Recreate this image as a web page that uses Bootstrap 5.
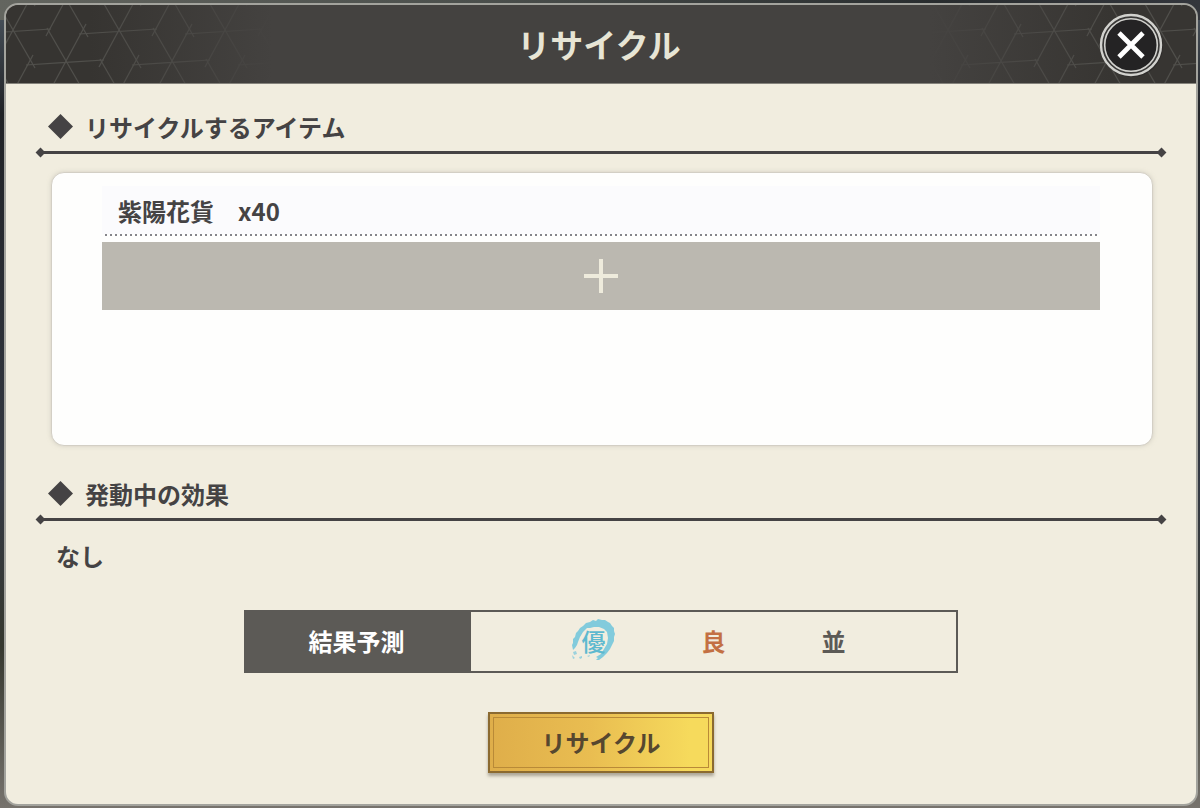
<!DOCTYPE html>
<html lang="ja">
<head>
<meta charset="utf-8">
<meta name="viewport" content="width=device-width, initial-scale=1">
<title>リサイクル</title>
<link href="https://cdn.jsdelivr.net/npm/bootstrap@5.3.0/dist/css/bootstrap.min.css" rel="stylesheet">
<style>
:root { --ink: #454344; --paper: #f1eddf; --slate: #5c5a56; }
body { font-family: "Noto Sans CJK JP", "Noto Sans", sans-serif; font-size: 24px; line-height: 36px; font-weight: 700; color: var(--ink); background: #3b3e42; }
.backdrop { padding: 3px 2px 2px 4px; background: linear-gradient(90deg, #63655f, #4b4f4c 40%, #292d2f 78%, #33363c) top / 100% 20px no-repeat, linear-gradient(#4c5660, #202226 14%, #343943 60%, #36382f 80%, #77736d); }
.dialog-panel { background: var(--paper); border: 2px solid #a3a39d; border-radius: 14px; overflow: hidden; }
.dialog-head { height: 79px; background: #444240; border-bottom: 1px solid #85837c; }
.dialog-head h1 { font-size: 33px; line-height: 48px; font-weight: 700; color: #e7e5d5; }
.lattice { width: 280px; height: 100%; }
.lattice-start { left: 0; top: 0; }
.lattice-end { right: 0; top: 0; }
.close-btn { right: 33px; top: 8px; width: 64px; height: 64px; }
.dialog-content { padding: 25px 30px 28px; }
.section-title { font-size: 24px; line-height: 36px; font-weight: 700; gap: 12px; padding: 0 12px; }
.rule-line { height: 3px; margin: 6px 4px 0; background: var(--ink); position: relative; }
.rule-line::before, .rule-line::after { content: ""; position: absolute; top: -2px; width: 7px; height: 7px; background: var(--ink); transform: rotate(45deg); }
.rule-line::before { left: -3px; }
.rule-line::after { right: -3px; }
.item-box { min-height: 274px; margin: 18px 13px 0 15px; padding: 13px 52px 13px 50px; background: #fefefd; border: 1px solid #d3cfc5; border-radius: 13px; box-shadow: 0 0 4px #b5b1a680; }
.item-row { height: 48px; padding: 7px 16px 0; background: #fbfbfd; }
.dots { display: block; width: 100%; height: 2px; }
.add-btn { height: 68px; margin-top: 6px; background: #bbb8b0; border: 0; }
.effect-title { margin-top: 30px; }
.effect-text { margin: 17px 20px 0; }
.forecast { width: 714px; max-width: 100%; height: 63px; border: 2px solid var(--slate); margin-top: 36px; }
.forecast-label { width: 225px; padding-right: 4px; background: var(--slate); color: #fff; }
.forecast-label, .grade { line-height: 34px; padding-bottom: 1px; }
.grade { width: 120px; }
.grade-best { color: #5eb9cf; font-weight: 500; }
.grade-good { color: #c37043; }
.grade-normal { color: var(--slate); }
.brush { left: 36px; top: -6px; width: 48px; height: 44px; }
.gold-btn { width: 226px; height: 61px; margin-top: 39px; padding: 3px; border: 2px solid #8b6a30; background: linear-gradient(90deg, #dfae4a, #e9bd51 45%, #f6da5c 90%); box-shadow: 0 3px 3px #77705f90; color: #56472f; font-weight: 700; }
.gold-btn span { border: 1px solid #b98a37; padding-bottom: 2px; }
</style>
</head>
<body>
<div class="backdrop min-vh-100 d-flex">
<main class="dialog-panel flex-grow-1 d-flex flex-column" role="dialog" aria-labelledby="dlg-title">
  <header class="dialog-head position-relative d-flex align-items-center justify-content-center flex-shrink-0">
    <svg class="lattice lattice-start position-absolute" aria-hidden="true">
      <defs>
        <g id="star" fill="none" stroke="#504f4b" stroke-width="1.2">
          <path d="M-40 3L38 -2M-19-34L22 37M20-38L-20 36"/>
        </g>
        <pattern id="tileA" width="106" height="62" patternUnits="userSpaceOnUse" patternTransform="translate(-46 -10)">
          <use href="#star" x="53" y="36"/><use href="#star" x="0" y="5"/><use href="#star" x="106" y="5"/><use href="#star" x="0" y="67"/><use href="#star" x="106" y="67"/><use href="#star" x="53" y="-26"/><use href="#star" x="53" y="98"/>
        </pattern>
        <pattern id="tileB" width="106" height="62" patternUnits="userSpaceOnUse" patternTransform="translate(85 -10)">
          <use href="#star" x="53" y="36"/><use href="#star" x="0" y="5"/><use href="#star" x="106" y="5"/><use href="#star" x="0" y="67"/><use href="#star" x="106" y="67"/><use href="#star" x="53" y="-26"/><use href="#star" x="53" y="98"/>
        </pattern>
        <linearGradient id="fadeA"><stop offset="0.3" stop-color="#444240" stop-opacity="0"/><stop offset="0.95" stop-color="#444240"/></linearGradient>
        <linearGradient id="fadeB"><stop offset="0.05" stop-color="#444240"/><stop offset="0.7" stop-color="#444240" stop-opacity="0"/></linearGradient>
      </defs>
      <rect width="280" height="100%" fill="#363431"/><rect width="280" height="100%" fill="url(#tileA)"/><rect width="280" height="100%" fill="url(#fadeA)"/>
    </svg>
    <svg class="lattice lattice-end position-absolute" aria-hidden="true">
      <rect width="280" height="100%" fill="#373532"/><rect width="280" height="100%" fill="url(#tileB)"/><rect width="280" height="100%" fill="url(#fadeB)"/>
    </svg>
    <h1 id="dlg-title" class="m-0 pe-1 position-relative">リサイクル</h1>
    <button type="button" class="close-btn position-absolute btn p-0 border-0 d-flex" aria-label="閉じる">
      <svg width="64" height="64" viewBox="0 0 64 64" aria-hidden="true">
        <circle cx="33" cy="33" r="31" fill="#24222280"/>
        <circle cx="32" cy="32" r="30" fill="#393837" stroke="#d2d2ce" stroke-width="2.4"/>
        <circle cx="32" cy="32" r="26.3" fill="#242324" stroke="#d2d2ce" stroke-width="1.6"/>
        <path d="M20 20L44 44M44 20L20 44" stroke="#fff" stroke-width="4.8"/>
      </svg>
    </button>
  </header>
  <div class="dialog-content">
    <section>
      <h2 class="section-title d-flex align-items-center m-0">
        <svg width="25" height="26" viewBox="0 0 25 26" aria-hidden="true"><path d="M12.500 0L25 12.500 12.500 25 0 12.500Z" fill="#454344"/></svg>リサイクルするアイテム
      </h2>
      <div class="rule-line"></div>
      <div class="item-box">
        <div class="item-row">紫陽花貨　x40</div>
        <svg class="dots" aria-hidden="true"><line x1="3" y1="1" x2="100%" y2="1" stroke="#85858a" stroke-width="2" stroke-dasharray="2 3"/></svg>
        <button type="button" class="add-btn w-100 d-flex align-items-center justify-content-center" aria-label="アイテムを追加">
          <svg width="36" height="36" viewBox="0 0 36 36" aria-hidden="true"><path d="M18 1V35M1 18H35" stroke="#eeebdc" stroke-width="4"/></svg>
        </button>
      </div>
    </section>
    <section class="effect-title">
      <h2 class="section-title d-flex align-items-center m-0">
        <svg width="25" height="26" viewBox="0 0 25 26" aria-hidden="true"><path d="M12.500 0L25 12.500 12.500 25 0 12.500Z" fill="#454344"/></svg>発動中の効果
      </h2>
      <div class="rule-line"></div>
      <p class="effect-text">なし</p>
    </section>
    <div class="forecast d-flex mx-auto">
      <div class="forecast-label d-flex align-items-center justify-content-center flex-shrink-0">結果予測</div>
      <div class="flex-grow-1 d-flex align-items-center justify-content-center text-center">
        <div class="grade grade-best position-relative">
          <svg class="brush position-absolute" viewBox="0 0 48 44" aria-hidden="true">
            <path d="M5 30L3 32 2 27 3 25 3 21 5 19 6 15 8 13 10 10 13 8 16 5 20 4 23 2 26 3 28 1 32 2 35 2 38 4 40 5 42 8 44 10 44 13 45 16 44 19 44 23 42 27 40 31 37 35 33 39 29 42 26 42 28 40 26 39 31 36 34 31 37 26 38 20 37 14 34 11 29 9 24 9 20 10 17 10 13 14 10 19 8 24 7 27Z" fill="#82cbdc"/>
            <path d="M3 34L6 33 7 36 4 37ZM9 39L12 38 12 40 10 41ZM2 37L5 40 3 41ZM17 38L20 37 19 39Z" fill="#9bd2dd"/>
          </svg>
          <span class="position-relative">優</span>
        </div>
        <div class="grade grade-good">良</div>
        <div class="grade grade-normal">並</div>
      </div>
    </div>
    <button type="button" class="gold-btn d-flex mx-auto"><span class="w-100 h-100 d-flex align-items-center justify-content-center">リサイクル</span></button>
  </div>
</main>
</div>
<script src="https://cdn.jsdelivr.net/npm/bootstrap@5.3.0/dist/js/bootstrap.bundle.min.js"></script>
</body>
</html>
